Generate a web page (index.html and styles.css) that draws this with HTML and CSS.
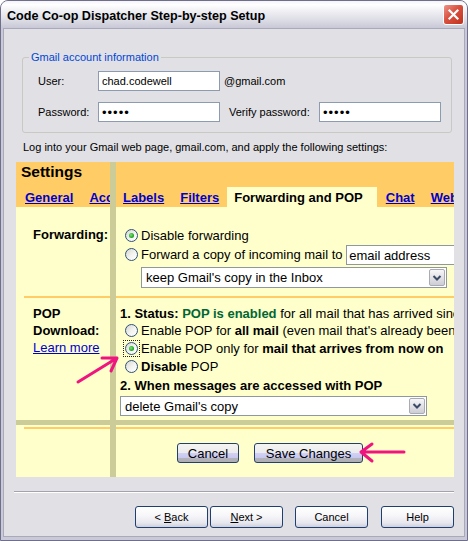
FILE: index.html
```html
<!DOCTYPE html>
<html>
<head>
<meta charset="utf-8">
<title>Code Co-op Dispatcher Step-by-step Setup</title>
<link rel="stylesheet" href="styles.css">
</head>
<body>
<div class="screen">
  <div class="window">
    <div class="titlebar">
      <span class="title">Code Co-op Dispatcher Step-by-step Setup</span>
      <span class="close"><svg width="13" height="13" viewBox="0 0 13 13"><path d="M2.5 2.5L10.5 10.5M10.5 2.5L2.5 10.5" stroke="#fff" stroke-width="2.2" stroke-linecap="square"/></svg></span>
    </div>
    <div class="client">
      <fieldset class="account">
        <legend>Gmail account information</legend>
        <div class="acc-grid">
          <label class="alabel">User:</label>
          <input class="field" type="text" value="chad.codewell">
          <span class="suffix">@gmail.com</span>
          <span></span>
          <label class="alabel">Password:</label>
          <input class="field pw" type="password" value="abcde">
          <label class="vlabel">Verify password:</label>
          <input class="field pw" type="password" value="abcde">
        </div>
      </fieldset>
      <p class="instr">Log into your Gmail web page, gmail.com, and apply the following settings:</p>

      <div class="gmail">
        <div class="hd-left">
          <div class="settings-title">Settings</div>
          <div class="tabs tabs-left"><a class="tab">General</a><a class="tab">Accounts</a></div>
        </div>
        <div class="seam"></div>
        <div class="hd-right">
          <div class="tabs tabs-right"><a class="tab">Labels</a><a class="tab">Filters</a><span class="tab-active">Forwarding and POP</span><a class="tab">Chat</a><a class="tab">Web Clips</a></div>
        </div>

        <div class="lbl fwd-lbl">Forwarding:</div>
        <div class="opts fwd-opts">
          <div class="fline l1"><span class="radio on"></span>Disable forwarding</div>
          <div class="fline l2"><span class="radio"></span>Forward a copy of incoming mail to <input class="gfield" type="text" value="email address"></div>
          <div class="gsel fsel"><span>keep Gmail's copy in the Inbox</span><span class="dd"><svg width="10" height="8" viewBox="0 0 10 8"><path d="M1.5 2L5 5.5L8.5 2" fill="none" stroke="#3b4a66" stroke-width="2"/></svg></span></div>
        </div>

        <div class="rule rule-left"></div>
        <div class="rule rule-right"></div>

        <div class="lbl pop-lbl">POP<br>Download:<br><a class="learn">Learn more</a></div>
        <div class="opts pop-opts">
          <div class="pline status"><b>1. Status:</b> <b class="green">POP is enabled</b> for all mail that has arrived since 10/14/07</div>
          <div class="pline rl"><span class="radio"></span>Enable POP for <b>all mail</b> (even mail that's already been downloaded)</div>
          <div class="pline rl"><span class="focus"><span class="radio on"></span></span>Enable POP only for <b>mail that arrives from now on</b></div>
          <div class="pline rl"><span class="radio"></span><b>Disable</b> POP</div>
          <div class="pline when"><b>2. When messages are accessed with POP</b></div>
          <div class="gsel psel"><span>delete Gmail's copy</span><span class="dd"><svg width="10" height="8" viewBox="0 0 10 8"><path d="M1.5 2L5 5.5L8.5 2" fill="none" stroke="#3b4a66" stroke-width="2"/></svg></span></div>
        </div>

        <div class="band"></div>

        <div class="foot foot-left"></div>
        <div class="foot foot-right">
          <button class="gbtn gcancel" type="button">Cancel</button>
          <button class="gbtn gsave" type="button">Save Changes</button>
        </div>
      </div>

      <div class="sep"></div>
      <div class="wiz">
        <button class="wbtn back" type="button">&lt; <u>B</u>ack</button>
        <button class="wbtn next" type="button"><u>N</u>ext &gt;</button>
        <button class="wbtn cancel" type="button">Cancel</button>
        <button class="wbtn help" type="button">Help</button>
      </div>
    </div>
  </div>
  <svg class="overlay" width="468" height="541" viewBox="0 0 468 541">
    <g fill="none" stroke="#f0157e" stroke-width="3" stroke-linecap="round" stroke-linejoin="round">
      <path d="M78 382L117 358M102 358L117 358L111 371"/>
      <path d="M404 452L361 452M372 444L361 452L372 461"/>
    </g>
  </svg>
</div>
</body>
</html>
```
FILE: styles.css
```css
* { box-sizing: border-box; }
html, body { margin: 0; padding: 0; }
body { background: #fff; font-family: "Liberation Sans", Arial, sans-serif; }

.screen { position: relative; width: 468px; height: 541px; overflow: hidden; }

.window {
  display: flex; flex-direction: column;
  width: 468px; height: 541px;
  border: 1px solid #6f6f8c; border-radius: 8px 8px 0 0;
  background: #c9c9d8;
}
.titlebar {
  flex: none; height: 27px;
  display: flex; align-items: center; justify-content: space-between;
  padding: 0 3px 0 6px;
  border-radius: 7px 7px 0 0;
  background: linear-gradient(#f4f4f8 0%, #ffffff 14%, #eeeef3 40%, #dddde6 70%, #c8c8d7 100%);
}
.title { font: bold 12.6px "Liberation Sans", Arial, sans-serif; color: #000; padding-top: 3px; }
.close {
  width: 21px; height: 21px;
  border: 1px solid #fff; border-radius: 3px;
  background: linear-gradient(135deg, #ec9488 0%, #d9503f 45%, #c0321f 100%);
  display: flex; align-items: center; justify-content: center;
}

.client {
  flex: 1;
  margin: 0 2px 3px;
  border: 1px solid #a9a9bc;
  background: #e1e0e5;
  font-size: 11px; color: #000;
}

/* account group */
.account {
  margin: 22px 0 0 18px; width: 430px;
  padding: 7px 0 10px 15px;
  border: 1px solid #c9c8c2; border-radius: 3px;
}
.account legend {
  padding: 0 2px; margin-left: -9px;
  color: #0046d5; font-size: 11px; line-height: 13px;
}
.acc-grid {
  display: grid;
  grid-template-columns: 60px 122px 99px 122px;
  grid-template-rows: 20px 20px;
  row-gap: 11px; align-items: center;
}
.field {
  width: 122px; height: 20px; margin: 0;
  border: 1px solid #8d9bb0; background: #fff;
  padding: 0 0 0 3px;
  font: 11px "Liberation Sans", Arial, sans-serif; color: #000;
}
.field.pw { font-size: 13px; letter-spacing: 1px; }
.suffix { padding-left: 4px; }
.vlabel { padding-left: 9px; }

.instr { margin: 8px 0 0 19px; line-height: 13px; }

/* gmail screenshot */
.gmail {
  margin: 8px 0 0 12px; width: 438px; height: 315px;
  display: grid;
  grid-template-columns: 94px 6px 338px;
  grid-template-rows: 45px 89px 2px 122px 5px 52px;
  background: #ffffcc; overflow: hidden;
  font-family: "Liberation Sans", Arial, sans-serif; font-size: 13px; color: #000;
}
.gmail > * { min-width: 0; overflow: hidden; white-space: nowrap; }

.hd-left { grid-column: 1; grid-row: 1; background: #ffcc66; }
.hd-right { grid-column: 3; grid-row: 1; background: #ffcc66; padding-top: 25px; }
.seam { grid-column: 2; grid-row: 1 / -1; background: #cccc99; }
.settings-title { height: 25px; line-height: 20px; padding-left: 5px; font-size: 15.5px; font-weight: bold; }
.tabs { display: flex; height: 20px; line-height: 18px; font-weight: bold; }
.tab, .tab-active { padding-top: 2px; }
.tabs-left { padding-left: 1px; }
.tabs-right { margin-left: -1px; }
.tab { padding-left: 8px; padding-right: 8px; color: #0000cc; text-decoration: underline; }
.tab-active { padding-left: 7px; padding-right: 14px; background: #ffffcc; color: #000; margin-right: 1px; }

.lbl { grid-column: 1; font-weight: bold; padding-left: 17px; }
.fwd-lbl { grid-row: 2; padding-top: 19px; line-height: 18px; }
.pop-lbl { grid-row: 4; padding-top: 7px; line-height: 17px; }
.learn { font-weight: normal; color: #0000cc; text-decoration: underline; }

.opts { grid-column: 3; }
.fwd-opts { grid-row: 2; padding: 19px 0 0 9px; }
.fline { height: 19px; line-height: 19px; }
.fline.l2 { height: 20px; line-height: 20px; margin-bottom: 2px; }
.gfield {
  width: 130px; height: 20px; margin: 0;
  border: 1px solid #8f979f; background: #fff;
  padding: 0 0 0 2px; vertical-align: top;
  font: 13px "Liberation Sans", Arial, sans-serif; color: #000;
}

.radio {
  position: relative; display: inline-block;
  width: 13px; height: 13px; margin-right: 3px;
  vertical-align: -2px;
  border: 1px solid #2f5079; border-radius: 50%;
  background: linear-gradient(135deg, #d6d6d0 0%, #f4f4f2 55%, #ffffff 100%);
}
.radio.on::after {
  content: ""; position: absolute; left: 3px; top: 3px;
  width: 5px; height: 5px; border-radius: 50%;
  background: radial-gradient(circle at 40% 40%, #7be37b 0%, #22a822 60%, #158a15 100%);
}
.focus {
  display: inline-block; width: 17px; height: 17px;
  border: 1px dotted #222; padding: 1px;
  margin: 0 1px 0 -2px; vertical-align: -4px;
}
.focus .radio { display: block; margin: 0; }

.gsel {
  display: flex; align-items: center; justify-content: space-between;
  background: #fff; border: 1px solid #8f979f;
  padding: 0 1px 0 4px;
}
.fsel { width: 306px; height: 21px; margin-left: 16px; }
.psel { width: 307px; height: 20px; }
.dd {
  width: 16px; height: 17px;
  border: 1px solid #a9aab3; border-radius: 2px;
  background: linear-gradient(#f7f7f9, #cdcdd5);
  display: flex; align-items: center; justify-content: center;
}
.psel .dd { height: 16px; }

.rule { grid-row: 3; background: #ffcc66; }
.rule-left { grid-column: 1; margin-left: 8px; }
.rule-right { grid-column: 3; }

.pop-opts { grid-row: 4; padding: 7px 0 0 4px; }
.pline { height: 18px; line-height: 18px; }
.pline.status { height: 17px; line-height: 17px; }
.pline.rl { padding-left: 5px; }
.pline.when { height: 20px; line-height: 20px; }
.green { color: #006633; }

.band { grid-column: 1 / -1; grid-row: 5; background: #cccc99; }

.foot { grid-row: 6; margin-top: 2px; border-top: 2px solid #ffcc66; }
.foot-left { grid-column: 1; margin-left: 8px; }
.foot-right { grid-column: 3; padding: 14px 0 0 61px; display: flex; align-items: flex-start; }
.gbtn {
  height: 20px; margin: 0; padding: 0;
  font: 13px "Liberation Sans", Arial, sans-serif; color: #000;
  border: 1px solid #253f6d; border-radius: 3px;
  background: linear-gradient(#f4f4f4 0%, #ebebeb 48%, #d2d2f6 49%, #c8c8ef 76%, #b3b3bb 77%, #aeaeb6 100%);
}
.gcancel { width: 62px; }
.gsave { width: 109px; margin-left: 15px; }

.sep { margin: 14px 0 0 10px; width: 440px; height: 2px; border-top: 1px solid #a3a3ad; border-bottom: 1px solid #fff; }

.wiz { display: flex; justify-content: flex-end; margin: 13px 10px 0 0; }
.wbtn {
  width: 73px; height: 22px; margin: 0; padding: 0;
  font: 11px "Liberation Sans", Arial, sans-serif; color: #000;
  border: 1px solid #1f3f70; border-radius: 3px;
  background: linear-gradient(#ffffff 0%, #f6f6f9 45%, #e6e6ee 80%, #cfcfdb 100%);
}
.wbtn.next { margin-left: 2px; }
.wbtn.cancel { margin-left: 12px; }
.wbtn.help { margin-left: 13px; }

.overlay { position: absolute; left: 0; top: 0; pointer-events: none; }
```
